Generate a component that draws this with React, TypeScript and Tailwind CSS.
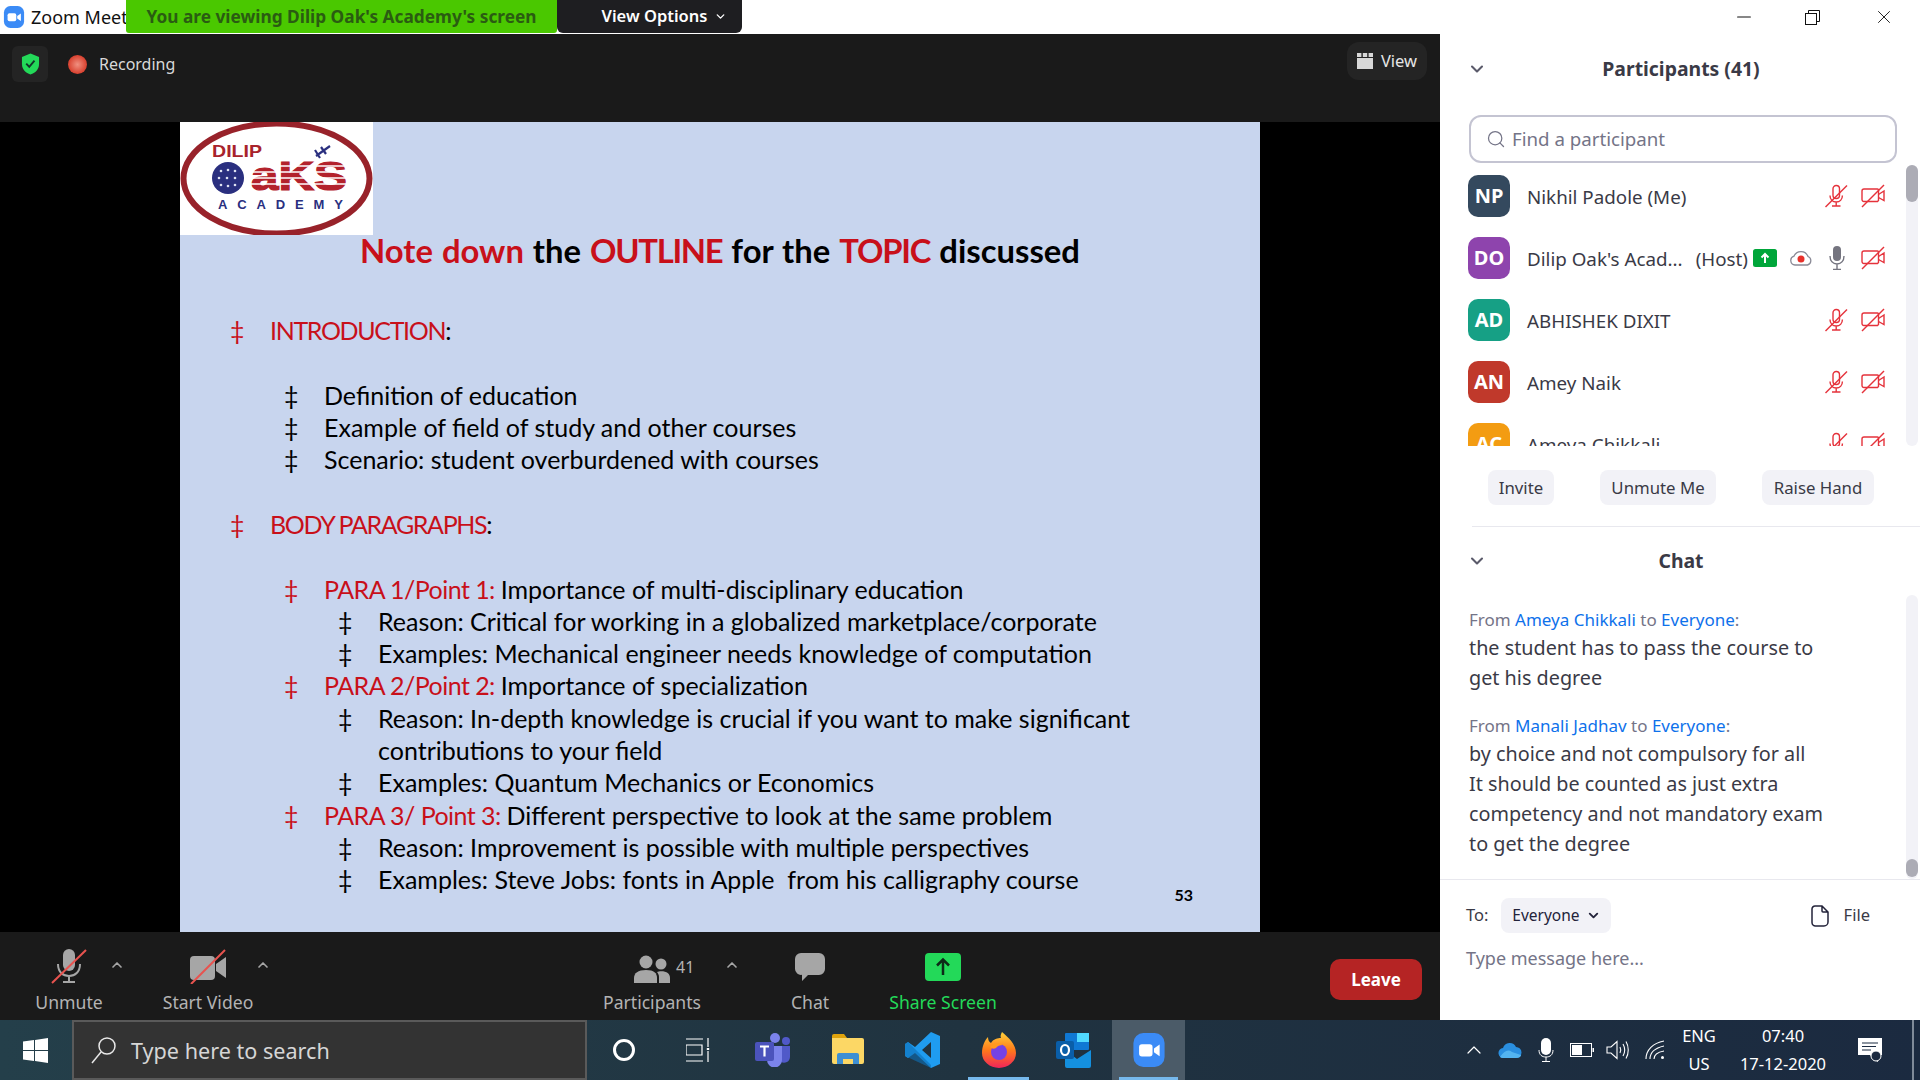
import { ChevronDown, ChevronUp, Search, Minus, X } from 'lucide-react';

const SLIDE_ROWS: { level: 0 | 1 | 2; red?: string; text?: string; bullet?: boolean }[] = [
  { level: 0, red: 'INTRODUCTION', text: ':', bullet: true },
  { level: 0 },
  { level: 1, text: 'Definition of education', bullet: true },
  { level: 1, text: 'Example of field of study and other courses', bullet: true },
  { level: 1, text: 'Scenario: student overburdened with courses', bullet: true },
  { level: 0 },
  { level: 0, red: 'BODY PARAGRAPHS', text: ':', bullet: true },
  { level: 0 },
  { level: 1, red: 'PARA 1/Point 1: ', text: 'Importance of multi-disciplinary education', bullet: true },
  { level: 2, text: 'Reason: Critical for working in a globalized marketplace/corporate', bullet: true },
  { level: 2, text: 'Examples: Mechanical engineer needs knowledge of computation', bullet: true },
  { level: 1, red: 'PARA 2/Point 2: ', text: 'Importance of specialization', bullet: true },
  { level: 2, text: 'Reason: In-depth knowledge is crucial if you want to make significant', bullet: true },
  { level: 2, text: 'contributions to your field' },
  { level: 2, text: 'Examples: Quantum Mechanics or Economics', bullet: true },
  { level: 1, red: 'PARA 3/ Point 3: ', text: 'Different perspective to look at the same problem', bullet: true },
  { level: 2, text: 'Reason: Improvement is possible with multiple perspectives', bullet: true },
  { level: 2, text: 'Examples: Steve Jobs: fonts in Apple  from his calligraphy course', bullet: true },
];

const LEVEL_PADDING = ['pl-[50px]', 'pl-[104px]', 'pl-[158px]'];
const RED_TRACKING = ['tracking-[-1.35px]', 'tracking-[-0.55px]', ''];

const PARTICIPANTS = [
  { initials: 'NP', name: 'Nikhil Padole (Me)', color: 'bg-[#34495e]' },
  { initials: 'DO', name: "Dilip Oak's Acad...", color: 'bg-[#8e44ad]', host: true },
  { initials: 'AD', name: 'ABHISHEK DIXIT', color: 'bg-[#16a085]' },
  { initials: 'AN', name: 'Amey Naik', color: 'bg-[#c0392b]' },
  { initials: 'AC', name: 'Ameya Chikkali', color: 'bg-[#f39c12]' },
];

function ZoomGlyph({ className }: { className: string }) {
  return (
    <svg viewBox="0 0 24 24" className={className}>
      <rect x="1" y="0" width="22" height="24" rx="7" fill="#3b8bf6" />
      <rect x="5" y="8" width="9.5" height="8.5" rx="2" fill="#fff" />
      <path d="M15.5 11l4-2.8v8.2l-4-2.8z" fill="#fff" />
    </svg>
  );
}

function MicOff({ className }: { className: string }) {
  return (
    <svg viewBox="0 0 24 24" fill="none" stroke="currentColor" strokeWidth="1.4" className={className}>
      <rect x="9" y="1.5" width="6.5" height="13" rx="3.2" />
      <path d="M6 11.5c0 4 2.7 6.5 6.2 6.5s6.2-2.5 6.2-6.5M12.2 18v3.5M8 22h8.5" />
      <path d="M1.5 23L23 1.5" />
    </svg>
  );
}

function VideoOff({ className }: { className: string }) {
  return (
    <svg viewBox="0 0 24 24" fill="none" stroke="currentColor" strokeWidth="1.4" className={className}>
      <path d="M16.5 17.5H3a2 2 0 0 1-2-2V7a2 2 0 0 1 2-2h13.5a1 1 0 0 1 1 1v10.5z" />
      <path d="M17.5 10.5L23 7v9.5l-5.5-3" />
      <path d="M1 23L23 1" />
    </svg>
  );
}

function Logo() {
  return (
    <svg viewBox="0 0 193 113" className="h-[113px] w-[193px] bg-white">
      <ellipse cx="96.5" cy="56.5" rx="93" ry="55" fill="#fff" stroke="#98222a" strokeWidth="6" />
      <text x="32" y="35" fontSize="17" fontWeight="700" fontFamily="Liberation Sans" fill="#a8232c" textLength="50" lengthAdjust="spacingAndGlyphs">DILIP</text>
      <circle cx="48" cy="56" r="16" fill="#2a2f7f" />
      <g fill="#dfe2f2">
        <circle cx="41" cy="49" r="1.3" /><circle cx="48" cy="48" r="1.3" /><circle cx="55" cy="49" r="1.3" />
        <circle cx="39" cy="56" r="1.3" /><circle cx="47" cy="56" r="1.3" /><circle cx="55" cy="56" r="1.3" />
        <circle cx="41" cy="63" r="1.3" /><circle cx="48" cy="64" r="1.3" /><circle cx="55" cy="63" r="1.3" />
      </g>
      <text x="71" y="68" fontSize="40" fontWeight="700" fontFamily="Liberation Sans" fill="#b3222c" stroke="#b3222c" strokeWidth="1.2" textLength="96" lengthAdjust="spacingAndGlyphs">aKS</text>
      <g stroke="#fff" strokeWidth="1.5">
        <path d="M68 44h102M68 50h102M68 56h102M68 62h102" />
      </g>
      <path d="M136 34l14-10M135 28l5 8M141 25l5 7" stroke="#2a2f7f" strokeWidth="2.2" fill="none" />
      <text x="38" y="87" fontSize="13" fontWeight="700" fontFamily="Liberation Sans" fill="#2a2f7f" textLength="125">ACADEMY</text>
    </svg>
  );
}

function TopStrip() {
  return (
    <div className="flex h-[34px] shrink-0 items-start bg-white">
      <ZoomGlyph className="ml-[3px] mt-[6px] h-[22px] w-[22px]" />
      <div className="ml-[6px] w-[95px] overflow-hidden whitespace-nowrap pt-[3px] text-[18px] leading-[28px] text-[#111]">
        Zoom Meeting
      </div>
      <div className="flex h-[33px] w-[431px] items-center justify-center rounded-b-[3px] bg-[#4ac800] text-[17.3px] font-bold text-[#2a5c12]">
        You are viewing Dilip Oak's Academy's screen
      </div>
      <div className="flex h-[33px] w-[185px] items-center justify-center gap-[7px] rounded-b-[6px] bg-[#1e1e21] pl-[30px] text-[16.5px] font-semibold text-white">
        View Options
        <ChevronDown className="h-[13px] w-[13px]" strokeWidth={2.5} />
      </div>
    </div>
  );
}

function MeetingHeader() {
  return (
    <div className="flex h-[88px] shrink-0 items-start justify-between bg-[#1a1a1a] pl-[12px] pr-[13px]">
      <div className="mt-[12px] flex items-center">
        <div className="flex h-[36px] w-[36px] items-center justify-center rounded-[6px] bg-[#242424]">
          <svg viewBox="0 0 20 22" className="h-[22px] w-[19px]">
            <path d="M10 0l9 3.5V11c0 5.5-4 9.5-9 11-5-1.500-9-5.500-9-11V3.500z" fill="#23d959" />
            <path d="M5.500 10.500l3.200 3.500 5.500-6.500" fill="none" stroke="#12352a" strokeWidth="2" />
          </svg>
        </div>
        <div className="ml-[20px] h-[19px] w-[19px] rounded-full bg-[radial-gradient(circle_at_50%_50%,#f09080,#d8402e_70%,#7a3a30)]" />
        <span className="ml-[12px] text-[16px] text-[#d9d9d9]">Recording</span>
      </div>
      <div className="mt-[8px] flex h-[38px] items-center gap-[8px] rounded-[12px] bg-[#242424] px-[10px] text-[16.5px] text-[#e6e6e6]">
        <svg viewBox="0 0 16 16" className="h-[16px] w-[16px]" fill="#d8d8d8">
          <rect x="0" y="0" width="4.400" height="4" />
          <rect x="5.800" y="0" width="4.400" height="4" />
          <rect x="11.600" y="0" width="4.400" height="4" />
          <rect x="0" y="5" width="16" height="11" />
        </svg>
        View
      </div>
    </div>
  );
}

function Slide() {
  return (
    <div className="flex min-h-0 flex-1 justify-center bg-black">
      <div className="relative w-[1080px] bg-[#c8d5ee] font-['Lato',sans-serif] text-[25px] text-black">
        <Logo />
        <div className="-mt-[4px] h-[40px] text-center text-[32.8px] font-bold leading-[40px] [word-spacing:1px]">
          <span className="text-[#c8101a]">Note down</span> the <span className="tracking-[-1.3px] text-[#c8101a]">OUTLINE</span> for the{' '}
          <span className="tracking-[-1.2px] text-[#c8101a]">TOPIC</span> discussed
        </div>
        <div className="mt-[43px]">
          {SLIDE_ROWS.map((row, i) => (
            <div key={i} className={`flex h-[32.3px] items-center whitespace-pre leading-[32px] ${LEVEL_PADDING[row.level]}`}>
              <span className={`w-[40px] shrink-0 ${row.red ? 'text-[#c8101a]' : ''}`}>{row.bullet ? '‡' : ''}</span>
              <span>
                {row.red && <span className={`text-[#c8101a] ${RED_TRACKING[row.level]}`}>{row.red}</span>}
                {row.text}
              </span>
            </div>
          ))}
        </div>
        <div className="absolute right-[67px] top-[761px] text-[16px] font-bold">53</div>
      </div>
    </div>
  );
}

function ToolButton({ label, width, className, children }: { label: string; width: string; className?: string; children: React.ReactNode }) {
  return (
    <div className={`relative flex flex-col items-center ${width} ${className ?? ''}`}>
      <div className="flex h-[35px] items-center justify-center">{children}</div>
      <div className="mt-[7px] text-[17.6px] leading-[22px]">{label}</div>
    </div>
  );
}

function Caret({ position }: { position: string }) {
  return <ChevronUp className={`absolute top-[8px] h-[16px] w-[16px] text-[#a6a6a6] ${position}`} strokeWidth={2.5} />;
}

function Toolbar() {
  return (
    <div className="flex h-[88px] shrink-0 items-start bg-[#1a1a1a] pt-[17px] text-[#b3b3b3]">
      <ToolButton label="Unmute" width="w-[138px]">
        <svg viewBox="0 0 36 35" className="h-[35px] w-[36px]">
          <rect x="12" y="0" width="12" height="22" rx="6" fill="#a6a6a6" />
          <path d="M7 15c0 8 5 12 11 12s11-4 11-12M18 27v6M12 33h12" fill="none" stroke="#a6a6a6" strokeWidth="2" />
          <path d="M1 34L35 1" stroke="#e8534f" strokeWidth="2" />
        </svg>
        <Caret position="left-[109px]" />
      </ToolButton>
      <ToolButton label="Start Video" width="w-[140px]">
        <svg viewBox="0 0 36 35" className="h-[35px] w-[36px]">
          <rect x="0" y="7" width="25" height="24" rx="4" fill="#a6a6a6" />
          <path d="M26 15l10-7v21l-10-7z" fill="#a6a6a6" />
          <path d="M1 35L35 1" stroke="#e8534f" strokeWidth="2" />
        </svg>
        <Caret position="left-[117px]" />
      </ToolButton>
      <ToolButton label="Participants" width="w-[140px]" className="ml-[304px]">
        <svg viewBox="0 0 36 28" className="mt-[4px] h-[28px] w-[36px] fill-[#a6a6a6]">
          <circle cx="12" cy="7" r="6.500" />
          <circle cx="27" cy="9" r="5.500" />
          <path d="M0 28v-5c0-5 4-8 12-8s11 3 11 8v5z" />
          <path d="M25 28v-6c0-2-1-4-2-5 1-.500 2.500-.700 4-.700 6 0 9 2.700 9 6.700v5z" />
        </svg>
        <span className="absolute left-[94px] top-[6px] text-[16px]">41</span>
        <Caret position="left-[142px]" />
      </ToolButton>
      <ToolButton label="Chat" width="w-[120px]" className="ml-[28px]">
        <svg viewBox="0 0 30 28" className="h-[28px] w-[30px] fill-[#a6a6a6]">
          <path d="M6 0h18a6 6 0 0 1 6 6v10a6 6 0 0 1-6 6H13l-6 6v-6.200A6 6 0 0 1 0 16V6a6 6 0 0 1 6-6z" />
        </svg>
      </ToolButton>
      <ToolButton label="Share Screen" width="w-[146px]" className="text-[#23d959]">
        <svg viewBox="0 0 36 28" className="h-[28px] w-[36px]">
          <rect width="36" height="28" rx="4" fill="#23d959" />
          <path d="M18 22V7M12 12.500L18 6.500l6 6" fill="none" stroke="#0d2a18" strokeWidth="2.500" />
        </svg>
      </ToolButton>
      <div className="ml-[314px] mt-[10px] flex h-[41px] w-[92px] items-center justify-center rounded-[10px] bg-[#b52424] text-[17px] font-bold text-white">
        Leave
      </div>
    </div>
  );
}

function ParticipantRow({ p }: { p: (typeof PARTICIPANTS)[number] }) {
  return (
    <div className="flex h-[62px] shrink-0 items-center pr-[21px]">
      <div className={`flex h-[42px] w-[42px] items-center justify-center rounded-[10px] text-[20px] font-bold text-white ${p.color}`}>
        {p.initials}
      </div>
      <span className="ml-[17px] mt-[2px] text-[18.8px] text-[#3a3a46]">{p.name}</span>
      {p.host && <span className="ml-[13px] mt-[2px] text-[18.8px] text-[#3a3a46]">(Host)</span>}
      <div className="ml-auto flex items-center">
        {p.host && (
          <>
            <svg viewBox="0 0 24 18" className="h-[18px] w-[24px]">
              <rect width="24" height="18" rx="2.500" fill="#00a63a" />
              <path d="M12 14V5M8.500 8.500L12 5l3.500 3.500" fill="none" stroke="#fff" strokeWidth="2" />
            </svg>
            <svg viewBox="0 0 24 16" className="ml-[12px] h-[16px] w-[24px]">
              <path d="M6 15a4.500 4.500 0 0 1-1-8.800A7.500 7.500 0 0 1 19 6.500 4.500 4.500 0 0 1 18.500 15z" fill="none" stroke="#8a8a96" strokeWidth="1.300" />
              <circle cx="12" cy="9" r="3.500" fill="#e8312a" />
            </svg>
            <svg viewBox="0 0 16 24" className="ml-[16px] mr-[16px] h-[24px] w-[16px]">
              <rect x="4" y="0" width="8" height="15" rx="4" fill="#74747f" />
              <path d="M1 10c0 5 3 8 7 8s7-3 7-8M8 18v5M4 23.500h8" fill="none" stroke="#74747f" strokeWidth="1.400" />
            </svg>
          </>
        )}
        {!p.host && <MicOff className="mr-[13px] h-[24px] w-[24px] text-[#e5323b]" />}
        <VideoOff className="h-[24px] w-[24px] text-[#e5323b]" />
      </div>
    </div>
  );
}

function Sidebar() {
  return (
    <div className="flex w-[480px] shrink-0 flex-col bg-white text-[#3a3a46]">
      <div className="flex h-[34px] shrink-0 items-center justify-end gap-[50px] pr-[25px] text-[#111]">
        <Minus className="h-[22px] w-[22px]" strokeWidth={1.1} />
        <svg viewBox="0 0 15 15" className="mr-[3px] h-[15px] w-[15px]" fill="none" stroke="currentColor" strokeWidth="1">
          <rect x=".5" y="3.500" width="11" height="11" />
          <path d="M3.500 3.500V.5h11v11h-3" />
        </svg>
        <X className="h-[22px] w-[22px]" strokeWidth={1} />
      </div>
      <div className="relative flex h-[71px] shrink-0 items-center justify-center pb-[2px] pl-[2px] text-[19.4px] font-bold">
        <ChevronDown className="absolute left-[27px] h-[20px] w-[20px] text-[#5a5a6a]" strokeWidth={2.5} />
        Participants (41)
      </div>
      <div className="ml-[29px] mt-[10px] flex h-[48px] w-[428px] shrink-0 items-center rounded-[12px] border-2 border-[#c4c4d2] pl-[15px] text-[18.7px] text-[#747487]">
        <Search className="mr-[6px] h-[20px] w-[20px]" strokeWidth={1.5} />
        Find a participant
      </div>
      <div className="mt-[2px] flex h-[281px] shrink-0 pl-[28px] pr-[2px]">
        <div className="min-w-0 flex-1 overflow-hidden">
          {PARTICIPANTS.map((p) => (
            <ParticipantRow key={p.initials} p={p} />
          ))}
        </div>
        <div className="h-full w-[12px] rounded-full bg-[#f2f2f7]">
          <div className="h-[37px] rounded-full bg-[#acacb5]" />
        </div>
      </div>
      <div className="mt-[24px] flex h-[35px] shrink-0 pl-[48px] text-[16.8px] text-[#3a3a46]">
        <div className="flex w-[66px] items-center justify-center rounded-[8px] bg-[#f2f2f7]">Invite</div>
        <div className="ml-[46px] flex w-[116px] items-center justify-center rounded-[8px] bg-[#f2f2f7]">Unmute Me</div>
        <div className="ml-[46px] flex w-[112px] items-center justify-center rounded-[8px] bg-[#f2f2f7]">Raise Hand</div>
      </div>
      <div className="ml-[32px] mt-[21px] h-[1px] shrink-0 bg-[#e8e8ee]" />
      <div className="relative flex h-[68px] shrink-0 items-center justify-center pl-[2px] text-[19.4px] font-bold">
        <ChevronDown className="absolute left-[27px] h-[20px] w-[20px] text-[#5a5a6a]" strokeWidth={2.5} />
        Chat
      </div>
      <div className="flex h-[284px] shrink-0 pl-[29px] pr-[2px]">
        <div className="min-w-0 flex-1 pt-[12px] text-[19.8px] leading-[30px]">
          <div className="text-[17px] leading-[26px] text-[#747487]">
            From <span className="text-[#0e71eb]">Ameya Chikkali</span> to <span className="text-[#0e71eb]">Everyone</span>:
          </div>
          <div>the student has to pass the course to</div>
          <div>get his degree</div>
          <div className="mt-[20px] text-[17px] leading-[26px] text-[#747487]">
            From <span className="text-[#0e71eb]">Manali Jadhav</span> to <span className="text-[#0e71eb]">Everyone</span>:
          </div>
          <div>by choice and not compulsory for all</div>
          <div>It should be counted as just extra</div>
          <div>competency and not mandatory exam</div>
          <div>to get the degree</div>
        </div>
        <div className="flex h-full w-[12px] flex-col justify-end rounded-full bg-[#f2f2f7]">
          <div className="mb-[2px] h-[18px] rounded-full bg-[#acacb5]" />
        </div>
      </div>
      <div className="h-[1px] shrink-0 bg-[#e8e8ee]" />
      <div className="mt-[18px] flex h-[35px] shrink-0 items-center pl-[26px] pr-[50px] text-[16.5px]">
        <span>To:</span>
        <div className="ml-[13px] flex h-[35px] w-[110px] items-center justify-center gap-[6px] rounded-[8px] bg-[#f2f2f7] text-[15.5px] text-[#23233a]">
          Everyone
          <ChevronDown className="h-[15px] w-[15px]" strokeWidth={3} />
        </div>
        <svg viewBox="0 0 18 22" className="ml-auto h-[22px] w-[18px]" fill="none" stroke="#23233a" strokeWidth="1.500">
          <path d="M4 1h7l6 6v10a4 4 0 0 1-4 4H4.500A3.500 3.500 0 0 1 1 17.500V4a3 3 0 0 1 3-3zM11 1v5a1 1 0 0 0 1 1h5" />
        </svg>
        <span className="ml-[15px]">File</span>
      </div>
      <div className="pl-[26px] pt-[12px] text-[18px] text-[#747487]">Type message here...</div>
    </div>
  );
}

function TaskIcon({ width, active, underline, children }: { width: string; active?: boolean; underline?: boolean; children: React.ReactNode }) {
  return (
    <div className={`relative flex h-full shrink-0 items-center justify-center ${width} ${active ? 'bg-[#4b5b68]' : ''}`}>
      {children}
      {underline && <div className="absolute bottom-0 left-[7px] right-[7px] h-[3px] bg-[#76b9ed]" />}
    </div>
  );
}

function Taskbar() {
  return (
    <div className="flex h-[60px] shrink-0 bg-linear-to-r from-[#243f4a] via-[#203340] to-[#1b2a40] text-white">
      <div className="flex w-[72px] shrink-0 items-center justify-center">
        <svg viewBox="0 0 25 25" className="ml-[-2px] h-[25px] w-[25px] fill-white">
          <path d="M0 3.500l11-1.500v10H0zM12 1.900L25 0v12H12zM0 13h11v10L0 21.500zM12 13h13v12l-13-1.900z" />
        </svg>
      </div>
      <div className="flex w-[515px] shrink-0 items-center border-2 border-[#5a5a5a] bg-[#333333] pl-[16px] text-[21.6px] text-[#d6d6d6]">
        <svg viewBox="0 0 28 28" className="h-[28px] w-[28px]" fill="none" stroke="#e8e8e8" strokeWidth="1.500">
          <circle cx="17" cy="10" r="8" />
          <path d="M11 16L2 27" />
        </svg>
        <span className="ml-[13px] pt-[2px]">Type here to search</span>
      </div>
      <TaskIcon width="w-[74px]">
        <div className="h-[22px] w-[22px] rounded-full border-[3px] border-white" />
      </TaskIcon>
      <TaskIcon width="w-[74px]">
        <svg viewBox="0 0 24 24" className="h-[24px] w-[24px]" fill="none" stroke="#fff" strokeWidth="1.200">
          <path d="M0 1h17M0 23h17M0 7h16v10H0z" />
          <path d="M22 0v9M22 13v11" />
          <rect x="20.800" y="10" width="2.400" height="2" fill="#fff" stroke="none" />
        </svg>
      </TaskIcon>
      <TaskIcon width="w-[75px]">
        <svg viewBox="0 0 36 34" className="h-[34px] w-[36px]">
          <circle cx="20" cy="5" r="5" fill="#7b83eb" />
          <circle cx="31" cy="8" r="4" fill="#5059c9" />
          <path d="M26 13h9v11a6 6 0 0 1-9 5z" fill="#5059c9" />
          <path d="M12 13h15v14a7.500 7.500 0 0 1-15 0z" fill="#7b83eb" />
          <rect x="0" y="9" width="19" height="19" rx="2" fill="#4b53bc" />
          <path d="M5 13.500h9M9.500 13.500v10" stroke="#fff" strokeWidth="2.200" />
        </svg>
      </TaskIcon>
      <TaskIcon width="w-[75px]">
        <svg viewBox="0 0 32 32" className="h-[32px] w-[32px]">
          <path d="M0 2a2 2 0 0 1 2-2h10l3 4H0z" fill="#dfa30c" />
          <path d="M0 4h30a2 2 0 0 1 2 2v22a2 2 0 0 1-2 2H2a2 2 0 0 1-2-2z" fill="#fcd765" />
          <path d="M5 30V21a2 2 0 0 1 2-2h18a2 2 0 0 1 2 2v9h-6v-5H11v5z" fill="#3e8fd3" />
        </svg>
      </TaskIcon>
      <TaskIcon width="w-[76px]">
        <svg viewBox="0 0 36 36" className="h-[36px] w-[36px]">
          <path d="M26 0l9 4v28l-9 4L10 21l-7 5-3-2v-12l3-2 7 5zM26 10l-9 8 9 8z" fill="#1f9cf0" fillRule="evenodd" />
          <path d="M3 10l23 23V36L0 24V12z" fill="#0d6fb8" opacity=".6" />
        </svg>
      </TaskIcon>
      <TaskIcon width="w-[75px]" underline>
        <svg viewBox="0 0 36 36" className="h-[36px] w-[36px]">
          <defs>
            <linearGradient id="fx" x1="0" y1="0" x2="0" y2="1">
              <stop offset="0" stopColor="#ffd23a" />
              <stop offset=".5" stopColor="#ff7a1a" />
              <stop offset="1" stopColor="#f0245a" />
            </linearGradient>
          </defs>
          <path d="M21 0c6 5 14 12 14 21a17 15 0 0 1-34 0C1 14 4 8 7 5c0 3 1 5 3 6 2-4 7-5 10-5-1-2 0-4 1-6z" fill="url(#fx)" />
          <circle cx="18" cy="20" r="8" fill="#7542e5" />
          <path d="M9 15c3-4 9-5 13-2-3 0-6 1-7 3-2 1-4 1-6-1z" fill="#ff9a1f" />
        </svg>
      </TaskIcon>
      <TaskIcon width="w-[76px]">
        <svg viewBox="0 0 36 36" className="h-[36px] w-[36px]">
          <rect x="9" y="1" width="24" height="17" rx="1" fill="#0f78d4" />
          <rect x="21" y="1" width="12" height="9" fill="#50d9ff" />
          <path d="M9 18l12 9 14-9v16a2 2 0 0 1-2 2H11a2 2 0 0 1-2-2z" fill="#1490df" />
          <rect x="0" y="9" width="18" height="18" rx="2" fill="#0a5ea8" />
          <ellipse cx="9" cy="18" rx="4" ry="5" fill="none" stroke="#fff" strokeWidth="2.200" />
        </svg>
      </TaskIcon>
      <TaskIcon width="w-[73px]" active underline>
        <ZoomGlyph className="h-[34px] w-[34px]" />
      </TaskIcon>
      <div className="ml-[271px] flex h-full items-center text-[17px]">
        <div className="flex w-[36px] justify-center">
          <ChevronUp className="h-[24px] w-[24px]" strokeWidth={1.2} />
        </div>
        <div className="flex w-[36px] justify-center">
          <svg viewBox="0 0 24 16" className="h-[16px] w-[24px]">
            <path d="M6 16a5 5 0 0 1-1-10 7 7 0 0 1 13-1 5.500 5.500 0 0 1 0 11z" fill="#2a8fe0" />
            <path d="M2 15c4-6 8-8 12-5l9 3c0 2-2 3-5 3H6a6 6 0 0 1-4-1z" fill="#53b4f0" />
          </svg>
        </div>
        <div className="flex w-[35px] justify-center">
          <svg viewBox="0 0 16 24" className="h-[24px] w-[16px]">
            <rect x="3" y="0" width="10" height="17" rx="5" fill="#fff" />
            <path d="M1 12c0 5 3 7 7 7s7-2 7-7M8 19v4M4 23.500h8" fill="none" stroke="#fff" strokeWidth="1" />
          </svg>
        </div>
        <div className="flex w-[37px] justify-center">
          <svg viewBox="0 0 24 14" className="h-[14px] w-[24px]">
            <rect x=".5" y=".5" width="21" height="13" fill="none" stroke="#fff" />
            <rect x="2" y="2" width="10" height="10" fill="#fff" />
            <rect x="22.500" y="5" width="1.500" height="4" fill="#fff" />
          </svg>
        </div>
        <div className="flex w-[36px] justify-center">
          <svg viewBox="0 0 24 20" className="h-[20px] w-[24px]" fill="none" stroke="#fff" strokeWidth="1.100">
            <path d="M1 7h4l6-5.500v17L5 13H1zM14 7c1 2 1 4 0 6M17 4c2 3.500 2 8.500 0 12M20 1.500c3 5 3 12 0 17" />
          </svg>
        </div>
        <div className="flex w-[38px] justify-center">
          <svg viewBox="0 0 20 20" className="h-[20px] w-[20px]" fill="none" stroke="#fff" strokeWidth="1.100">
            <path d="M1 19C1 10 8 3 19 1M5 19c0-6 5-11 14-13M9 19c0-4 4-7 10-8" />
            <circle cx="17.500" cy="17.500" r="1.500" fill="#fff" stroke="none" />
          </svg>
        </div>
        <div className="w-[50px] text-center text-[16.5px] leading-[28px]">
          <div>ENG</div>
          <div>US</div>
        </div>
        <div className="w-[118px] text-center text-[16.5px] leading-[28px]">
          <div>07:40</div>
          <div>17-12-2020</div>
        </div>
        <div className="flex w-[56px] justify-center">
          <svg viewBox="0 0 24 24" className="h-[24px] w-[24px]">
            <path d="M0 0h24v17h-4v7l-5-3-3-4H0z" fill="#fff" />
            <path d="M4 5h16M4 8.500h14M4 12h9" stroke="#1b2a40" strokeWidth="1" />
            <circle cx="18" cy="18" r="5" fill="#1b2a40" stroke="#fff" strokeWidth="1" />
          </svg>
        </div>
        <div className="ml-[14px] h-full w-[2px] bg-[#7f8a99]" />
      </div>
    </div>
  );
}

export default function App() {
  return (
    <div className="flex h-[1080px] w-[1920px] flex-col overflow-hidden font-['Noto_Sans',sans-serif]">
      <div className="flex min-h-0 flex-1">
        <div className="flex w-[1440px] shrink-0 flex-col">
          <TopStrip />
          <MeetingHeader />
          <Slide />
          <Toolbar />
        </div>
        <Sidebar />
      </div>
      <Taskbar />
    </div>
  );
}
